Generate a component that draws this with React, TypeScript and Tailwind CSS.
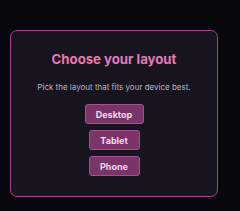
import React from "react";

export default function App() {
  const btn =
    "h-[20px] rounded-[3px] border border-[#a54e92] bg-[#7b3468] text-[9px] font-bold text-[#eadcea] flex items-center justify-center leading-none";
  return (
    <div
      className="w-[240px] h-[211px] bg-[#08070e] pt-[30px] pl-[10px]"
      style={{ fontFamily: "Inter, 'Liberation Sans', sans-serif" }}
    >
      <div className="w-[208px] h-[167px] rounded-[7px] border border-[#a9428b] bg-[#17141f] flex flex-col items-center pt-[22px]">
        <h1 className="text-[13.2px] font-bold text-[#e879b5] leading-none">Choose your layout</h1>
        <p className="mt-[17px] text-[8px] text-[#b9b4c2] leading-none">
          Pick the layout that fits your device best.
        </p>
        <div className="mt-[13px] flex flex-col items-center gap-[6px]">
          <button className={`${btn} w-[59px]`}>Desktop</button>
          <button className={`${btn} w-[51px]`}>Tablet</button>
          <button className={`${btn} w-[51px]`}>Phone</button>
        </div>
      </div>
    </div>
  );
}
